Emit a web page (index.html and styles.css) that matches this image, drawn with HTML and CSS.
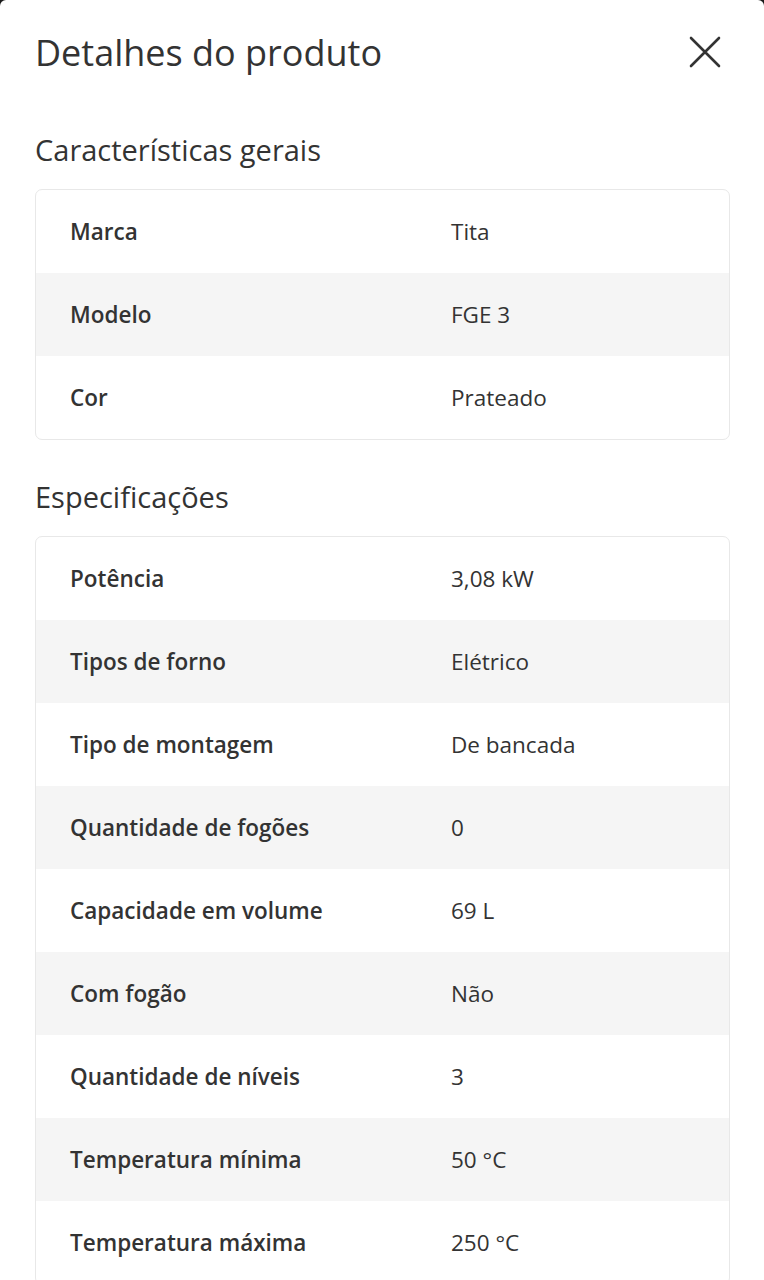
FILE: index.html
```html
<!DOCTYPE html>
<html lang="pt">
<head>
<meta charset="utf-8">
<link rel="stylesheet" href="styles.css">
</head>
<body>
<div class="sheet">
  <header class="header">
    <h1 class="title">Detalhes do produto</h1>
    <button class="close" aria-label="Fechar">
      <svg width="34" height="34" viewBox="0 0 34 34"><path d="M3 3 L31 31 M31 3 L3 31" stroke="#333" stroke-width="2.6" stroke-linecap="round" fill="none"/></svg>
    </button>
  </header>

  <section class="section">
    <h2 class="section-title">Características gerais</h2>
    <div class="table">
      <div class="row"><span class="label">Marca</span><span class="value">Tita</span></div>
      <div class="row alt"><span class="label">Modelo</span><span class="value">FGE 3</span></div>
      <div class="row"><span class="label">Cor</span><span class="value">Prateado</span></div>
    </div>
  </section>

  <section class="section">
    <h2 class="section-title">Especificações</h2>
    <div class="table">
      <div class="row"><span class="label">Potência</span><span class="value">3,08 kW</span></div>
      <div class="row alt"><span class="label">Tipos de forno</span><span class="value">Elétrico</span></div>
      <div class="row"><span class="label">Tipo de montagem</span><span class="value">De bancada</span></div>
      <div class="row alt"><span class="label">Quantidade de fogões</span><span class="value">0</span></div>
      <div class="row"><span class="label">Capacidade em volume</span><span class="value">69 L</span></div>
      <div class="row alt"><span class="label">Com fogão</span><span class="value">Não</span></div>
      <div class="row"><span class="label">Quantidade de níveis</span><span class="value">3</span></div>
      <div class="row alt"><span class="label">Temperatura mínima</span><span class="value">50 °C</span></div>
      <div class="row"><span class="label">Temperatura máxima</span><span class="value">250 °C</span></div>
    </div>
  </section>
</div>
</body>
</html>
```

FILE: styles.css
```css
html, body {
  margin: 0;
  padding: 0;
  background: #1a1a1a;
  height: 1280px;
  overflow: hidden;
}

.sheet {
  background: #fff;
  border-radius: 6px 6px 0 0;
  min-height: 1280px;
  padding: 0 34px 0 35px;
  font-family: "Open Sans", "Liberation Sans", sans-serif;
  color: #333;
}

.header {
  display: flex;
  align-items: center;
  justify-content: space-between;
  height: 104px;
}

.title {
  margin: 0;
  font-size: 36px;
  font-weight: 500;
  color: #333;
}

.close {
  border: 0;
  background: none;
  padding: 0;
  margin-right: 8px;
  width: 34px;
  height: 34px;
  display: flex;
}

.section {
  display: flex;
  flex-direction: column;
}

.section-title {
  margin: 26px 0 19px;
  height: 40px;
  line-height: 40px;
  font-size: 29px;
  font-weight: 500;
  color: #333;
}

.table {
  border: 1px solid #e8e8e8;
  border-radius: 7px;
  overflow: hidden;
  margin-bottom: 11px;
}

.row {
  display: grid;
  grid-template-columns: 381px 1fr;
  align-items: center;
  height: 83px;
  padding-left: 34px;
  font-size: 22.5px;
}

.row.alt {
  background: #f5f5f5;
}

.label {
  font-weight: 600;
  color: #333;
}

.value {
  font-weight: 400;
  color: #333;
}
```
